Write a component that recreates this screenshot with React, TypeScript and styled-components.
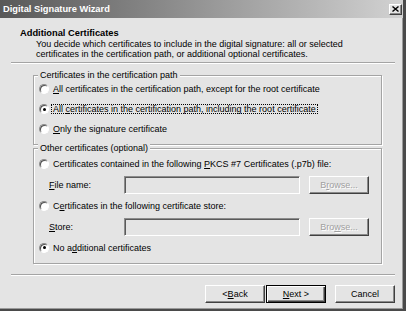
import styled, { createGlobalStyle } from "styled-components";

const GlobalStyle = createGlobalStyle`
  html, body {
    margin: 0;
    padding: 0;
    background: #e4e4e4;
  }
  body {
    font-family: "Liberation Sans", Arial, sans-serif;
  }
`;

const Window = styled.div`
  width: 406px;
  height: 311px;
  box-sizing: border-box;
  display: flex;
  flex-direction: column;
  background: #e4e4e4;
  border-right: 3px solid #4a4a4a;
  border-bottom: 2px solid #4a4a4a;
  box-shadow: inset -1px -1px #9a9a9a;
  font-size: 9px;
  color: #000;
  overflow: hidden;
`;

const TitleBar = styled.div`
  height: 18px;
  flex-shrink: 0;
  display: flex;
  align-items: center;
  justify-content: space-between;
  padding: 0 1px 0 3px;
  background: linear-gradient(to right, #585858, #d2d2d2);
  color: #fff;
  font-weight: bold;
  font-size: 9.3px;
`;

const CloseButton = styled.div`
  width: 13px;
  height: 11px;
  box-sizing: border-box;
  display: flex;
  align-items: center;
  justify-content: center;
  background: #e4e4e4;
  border: 1px solid;
  border-color: #fff #404040 #404040 #fff;
  box-shadow: inset -1px -1px #8a8a8a;
`;

const Header = styled.div`
  padding: 10px 0 0 20px;
`;

const Heading = styled.div`
  font-weight: bold;
  font-size: 9.3px;
  line-height: 11px;
`;

const Description = styled.div`
  padding-left: 16px;
  line-height: 10px;
  white-space: nowrap;
`;

const Separator = styled.div<{ $top: number }>`
  margin: ${(p) => p.$top}px 8px 0 11px;
  border-top: 1px solid #a4a4a4;
  border-bottom: 1px solid #fff;
`;

const GroupBox = styled.div<{ $top: number }>`
  margin: ${(p) => p.$top}px 0 0 33px;
  width: 349px;
  box-sizing: border-box;
  display: flex;
  flex-direction: column;
  border: 1px solid #a4a4a4;
  box-shadow: inset 1px 1px #fff, 1px 1px #fff;
  padding-bottom: 5px;
`;

const Caption = styled.div<{ $after: number }>`
  align-self: flex-start;
  margin: -6px 0 ${(p) => p.$after}px 4px;
  padding: 0 2px;
  line-height: 11px;
  background: #e4e4e4;
`;

const OptionRow = styled.div<{ $h: number }>`
  height: ${(p) => p.$h}px;
  display: flex;
  align-items: center;
  padding-left: 5px;
  white-space: nowrap;
`;

const RadioCircle = styled.span<{ $checked?: boolean }>`
  width: 10px;
  height: 10px;
  box-sizing: border-box;
  flex-shrink: 0;
  display: flex;
  align-items: center;
  justify-content: center;
  border-radius: 50%;
  border: 1px solid;
  border-color: #8c8c8c #fff #fff #8c8c8c;
  background: #fff;
  box-shadow: inset 1px 1px #505050;
  margin-right: 2px;

  &::after {
    content: "";
    width: 3px;
    height: 3px;
    border-radius: 50%;
    background: ${(p) => (p.$checked ? "#000" : "transparent")};
  }
`;

const OptionLabel = styled.span<{ $focused?: boolean }>`
  line-height: 8px;
  padding: 0 1px;
  border: 1px dotted ${(p) => (p.$focused ? "#000" : "transparent")};
`;

const FieldRow = styled.div<{ $h: number }>`
  height: ${(p) => p.$h}px;
  display: flex;
  align-items: center;
  padding-left: 15px;
`;

const FieldLabel = styled.span`
  width: 75px;
`;

const TextBox = styled.div`
  width: 176px;
  height: 18px;
  box-sizing: border-box;
  border: 1px solid;
  border-color: #8c8c8c #fff #fff #8c8c8c;
  box-shadow: inset 1px 1px #5a5a5a;
  background: #e4e4e4;
`;

const Button = styled.div<{ $default?: boolean; $disabled?: boolean }>`
  width: 60px;
  height: 18px;
  box-sizing: border-box;
  display: flex;
  align-items: center;
  justify-content: center;
  border: 1px solid;
  border-color: ${(p) => (p.$default ? "#000" : "#fff #404040 #404040 #fff")};
  box-shadow: ${(p) =>
    p.$default
      ? "inset 1px 1px #fff, inset -1px -1px #404040, inset -2px -2px #8a8a8a"
      : "inset -1px -1px #8a8a8a"};
  color: ${(p) => (p.$disabled ? "#a0a0a0" : "#000")};
  text-shadow: ${(p) => (p.$disabled ? "1px 1px #fff" : "none")};
  background: #e4e4e4;
`;

const BrowseButton = styled(Button)`
  margin-left: 9px;
`;

const ButtonBar = styled.div`
  display: flex;
  justify-content: flex-end;
  gap: 1px;
  margin-top: 9px;
  padding-right: 8px;
`;

const CancelButton = styled(Button)`
  margin-left: 8px;
`;

const Radio = ({
  checked,
  focused,
  children,
  h,
}: {
  checked?: boolean;
  focused?: boolean;
  children: React.ReactNode;
  h: number;
}) => (
  <OptionRow $h={h}>
    <RadioCircle $checked={checked} />
    <OptionLabel $focused={focused}>{children}</OptionLabel>
  </OptionRow>
);

export default function App() {
  return (
    <>
      <GlobalStyle />
      <Window>
        <TitleBar>
          <span>Digital Signature Wizard</span>
          <CloseButton>
            <svg width="7" height="6" viewBox="0 0 7 6">
              <path d="M0.5 0.5 L6.5 5.5 M6.5 0.5 L0.5 5.5" stroke="#000" strokeWidth="1.4" />
            </svg>
          </CloseButton>
        </TitleBar>
        <Header>
          <Heading>Additional Certificates</Heading>
          <Description>
            You decide which certificates to include in the digital signature: all or selected
            <br />
            certificates in the certification path, or additional optional certificates.
          </Description>
        </Header>
        <Separator $top={3} />
        <GroupBox $top={11}>
          <Caption $after={-2}>Certificates in the certification path</Caption>
          <Radio h={20}>
            <u>A</u>ll certificates in the certification path, except for the root certificate
          </Radio>
          <Radio h={20} checked focused>
            All <u>c</u>ertificates in the certification path, including the root certificate
          </Radio>
          <Radio h={20}>
            <u>O</u>nly the signature certificate
          </Radio>
        </GroupBox>
        <GroupBox $top={3}>
          <Caption $after={-1}>Other certificates (optional)</Caption>
          <Radio h={21}>
            Certificates contained in the following <u>P</u>KCS #7 Certificates (.p7b) file:
          </Radio>
          <FieldRow $h={21}>
            <FieldLabel>
              <u>F</u>ile name:
            </FieldLabel>
            <TextBox />
            <BrowseButton $disabled>
              B<u>r</u>owse...
            </BrowseButton>
          </FieldRow>
          <Radio h={21}>
            C<u>e</u>rtificates in the following certificate store:
          </Radio>
          <FieldRow $h={21}>
            <FieldLabel>
              <u>S</u>tore:
            </FieldLabel>
            <TextBox />
            <BrowseButton $disabled>
              Bro<u>w</u>se...
            </BrowseButton>
          </FieldRow>
          <Radio h={21} checked>
            No a<u>d</u>ditional certificates
          </Radio>
        </GroupBox>
        <Separator $top={10} />
        <ButtonBar>
          <Button>
            &lt; <u>B</u>ack
          </Button>
          <Button $default>
            <u>N</u>ext &gt;
          </Button>
          <CancelButton>Cancel</CancelButton>
        </ButtonBar>
      </Window>
    </>
  );
}
